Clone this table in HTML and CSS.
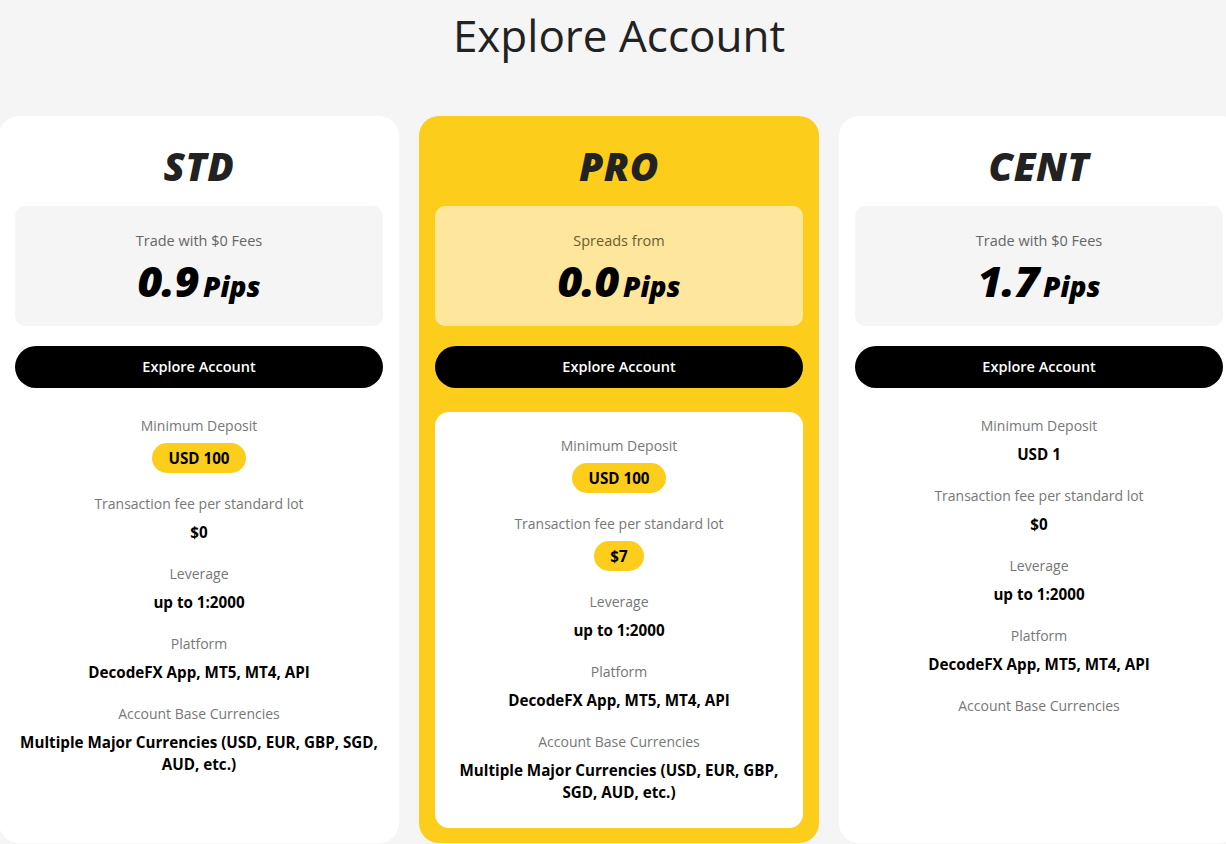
FILE: index.html
```html
<!DOCTYPE html>
<html lang="en">
<head>
<meta charset="utf-8">
<title>Explore Account</title>
<link rel="stylesheet" href="styles.css">
</head>
<body>
<main class="page">
  <h1 class="page-title">Explore Account</h1>
  <div class="cards">
    <section class="card">
      <h2 class="card-title">STD</h2>
      <div class="spread">
        <div class="spread-label">Trade with $0 Fees</div>
        <div class="spread-value"><span class="num">0.9</span><span class="unit">Pips</span></div>
      </div>
      <a class="btn">Explore Account</a>
      <div class="details">
        <div class="row"><div class="label">Minimum Deposit</div><div class="value"><span class="pill">USD 100</span></div></div>
        <div class="row"><div class="label">Transaction fee per standard lot</div><div class="value">$0</div></div>
        <div class="row"><div class="label">Leverage</div><div class="value">up to 1:2000</div></div>
        <div class="row"><div class="label">Platform</div><div class="value">DecodeFX App, MT5, MT4, API</div></div>
        <div class="row"><div class="label">Account Base Currencies</div><div class="value">Multiple Major Currencies (USD, EUR, GBP, SGD, AUD, etc.)</div></div>
      </div>
    </section>

    <section class="card card-pro">
      <h2 class="card-title">PRO</h2>
      <div class="spread">
        <div class="spread-label">Spreads from</div>
        <div class="spread-value"><span class="num">0.0</span><span class="unit">Pips</span></div>
      </div>
      <a class="btn">Explore Account</a>
      <div class="details details-box">
        <div class="row"><div class="label">Minimum Deposit</div><div class="value"><span class="pill">USD 100</span></div></div>
        <div class="row"><div class="label">Transaction fee per standard lot</div><div class="value"><span class="pill">$7</span></div></div>
        <div class="row"><div class="label">Leverage</div><div class="value">up to 1:2000</div></div>
        <div class="row"><div class="label">Platform</div><div class="value">DecodeFX App, MT5, MT4, API</div></div>
        <div class="row"><div class="label">Account Base Currencies</div><div class="value">Multiple Major Currencies (USD, EUR, GBP, SGD, AUD, etc.)</div></div>
      </div>
    </section>

    <section class="card">
      <h2 class="card-title">CENT</h2>
      <div class="spread">
        <div class="spread-label">Trade with $0 Fees</div>
        <div class="spread-value"><span class="num">1.7</span><span class="unit">Pips</span></div>
      </div>
      <a class="btn">Explore Account</a>
      <div class="details">
        <div class="row"><div class="label">Minimum Deposit</div><div class="value">USD 1</div></div>
        <div class="row"><div class="label">Transaction fee per standard lot</div><div class="value">$0</div></div>
        <div class="row"><div class="label">Leverage</div><div class="value">up to 1:2000</div></div>
        <div class="row"><div class="label">Platform</div><div class="value">DecodeFX App, MT5, MT4, API</div></div>
        <div class="row"><div class="label">Account Base Currencies</div></div>
      </div>
    </section>
  </div>
</main>
</body>
</html>
```
FILE: styles.css
```css
html, body {
  margin: 0;
  padding: 0;
  background: #f5f5f5;
  overflow: hidden;
}
body {
  font-family: "Open Sans", "Liberation Sans", sans-serif;
  color: #000;
  height: 844px;
}
.page {
  width: 1240px;
  margin-left: -1px;
}
.page-title {
  margin: 0;
  padding-top: 8px;
  height: 116px;
  box-sizing: border-box;
  text-align: center;
  font-size: 44px;
  line-height: 54px;
  font-weight: 400;
  color: #222;
}
.cards {
  display: flex;
  gap: 20px;
  align-items: stretch;
}
.card {
  width: 400px;
  flex: 0 0 400px;
  box-sizing: border-box;
  background: #fff;
  border-radius: 20px;
  padding: 25px 16px 15px;
  display: flex;
  flex-direction: column;
  align-items: stretch;
  height: 727px;
}
.card-pro {
  background: #fccd1a;
}
.card-title {
  margin: 0;
  text-align: center;
  font-size: 39px;
  line-height: 50px;
  font-weight: 800;
  font-style: italic;
  color: #222;
  letter-spacing: 0.5px;
}
.spread {
  margin-top: 15px;
  height: 120px;
  box-sizing: border-box;
  padding-top: 25px;
  background: #f5f5f5;
  border-radius: 10px;
  text-align: center;
}
.card-pro .spread {
  background: #fee79c;
}
.spread-label {
  font-size: 14.5px;
  line-height: 20px;
  color: #666;
}
.card-pro .spread-label {
  color: #6b5e2e;
}
.spread-value {
  margin-top: 9px;
  line-height: 42px;
  font-style: italic;
  font-weight: 800;
  color: #000;
}
.spread-value .num {
  font-size: 43px;
  letter-spacing: -0.5px;
}
.spread-value .unit {
  font-size: 28px;
  margin-left: 4px;
}
.btn {
  display: block;
  margin-top: 20px;
  height: 42px;
  line-height: 42px;
  background: #000;
  color: #fff;
  border-radius: 21px;
  text-align: center;
  font-size: 14.5px;
  font-weight: 600;
  cursor: pointer;
}
.details {
  margin-top: 28px;
  display: flex;
  flex-direction: column;
  gap: 21px;
  text-align: center;
}
.details-box {
  margin-top: 24px;
  background: #fff;
  border-radius: 14px;
  padding: 24px 16px 25px;
  flex: 1;
}
.row {
  display: flex;
  flex-direction: column;
  align-items: center;
  gap: 7px;
}
.label {
  font-size: 14px;
  line-height: 20px;
  color: #777;
}
.value {
  font-size: 15.2px;
  line-height: 22px;
  font-weight: 700;
  color: #000;
}
.pill {
  display: inline-block;
  background: #fccd1a;
  border-radius: 15px;
  height: 30px;
  line-height: 30px;
  padding: 0 16px;
}
```
